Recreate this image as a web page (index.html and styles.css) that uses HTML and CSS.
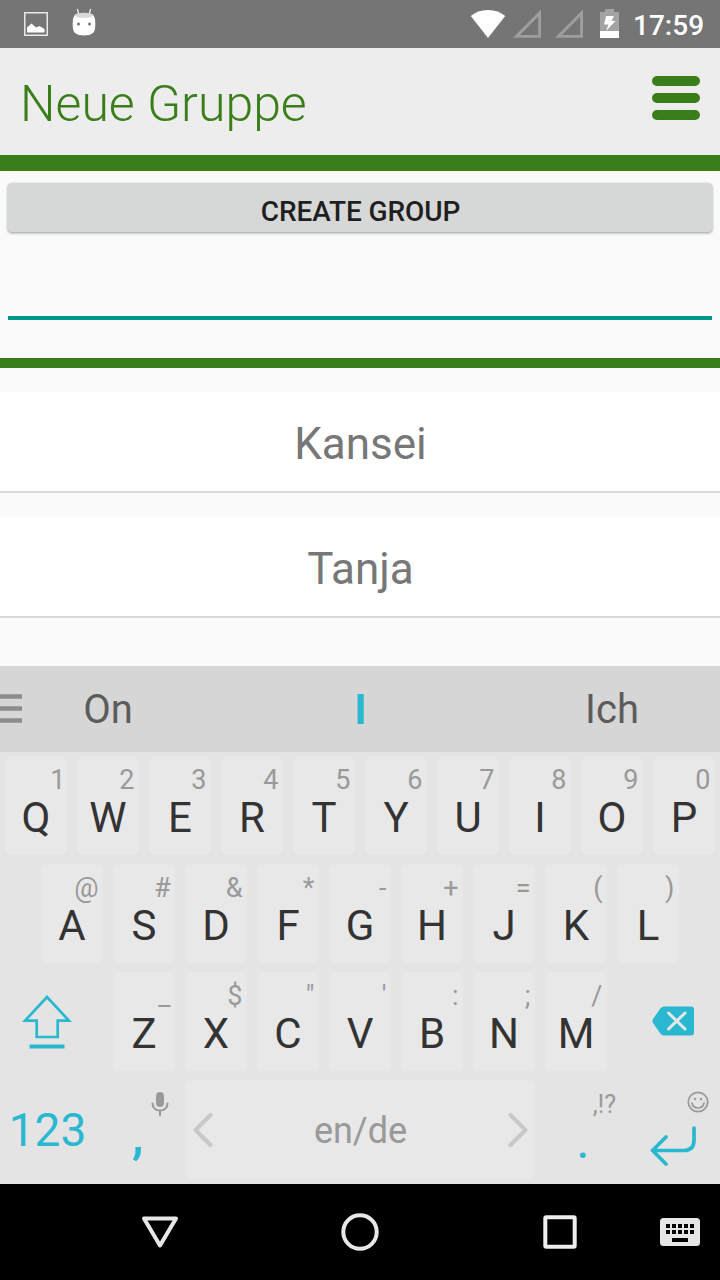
FILE: index.html
```html
<!DOCTYPE html>
<html lang="de">
<head>
<meta charset="utf-8">
<title>Neue Gruppe</title>
<link rel="stylesheet" href="styles.css">
</head>
<body>
<div class="statusbar">
  <svg class="ic-photo" width="24" height="24" viewBox="0 0 24 24"><rect x=".75" y=".75" width="22.5" height="22.5" fill="none" stroke="#e8e8e8" stroke-width="1.5"/><path d="M3 20.500V15.500L7.500 11.500L12 15.500L15.500 14L20.500 17V20.500Z" fill="#fff"/></svg>
  <svg class="ic-droid" width="24" height="28" viewBox="0 0 24 28"><path d="M5.500 1.500L7 7M18.500 1.500L17 7" stroke="#eee" stroke-width="1.300" stroke-linecap="round"/><path d="M3 7Q12 3.500 21 7Q23.500 9 23.300 17Q23.200 23 21 25Q18 27.500 12 27.500T3 25Q.8 23 .7 17Q.5 9 3 7Z" fill="#fff"/><ellipse cx="12" cy="7.300" rx="9.500" ry="2.600" fill="#d9d9d9"/><circle cx="6.500" cy="16" r="1.500" fill="#757575"/><circle cx="17.500" cy="16" r="1.500" fill="#757575"/></svg>
  <svg class="ic-wifi" width="36" height="30" viewBox="0 0 36 30"><path d="M.8 8Q7.500 2 18 2T35.200 8L18 30Z" fill="#fff"/></svg>
  <svg class="ic-signal" width="28" height="30" viewBox="0 0 28 30"><path d="M3.500 27.400H26.600V4Z" fill="none" stroke="#9e9e9e" stroke-width="2.900"/></svg>
  <svg class="ic-signal" width="28" height="30" viewBox="0 0 28 30"><path d="M3.500 27.400H26.600V4Z" fill="none" stroke="#9e9e9e" stroke-width="2.900"/></svg>
  <svg class="ic-battery" width="19" height="30" viewBox="0 0 19 30"><path d="M5 1H14V4H19V23H0V4H5Z" fill="#a3a3a3"/><path d="M0 23H19V30H0Z" fill="#fff"/><path d="M6 8H14L11.500 13H15.500L6 23L8.500 16.500H4Z" fill="#fff"/></svg>
  <span class="clock">17:59</span>
</div>
<header class="appbar">
  <h1 class="title">Neue Gruppe</h1>
  <div class="menu"><i class="menu-bar"></i><i class="menu-bar"></i><i class="menu-bar"></i></div>
</header>
<section class="form">
  <div class="create">CREATE GROUP</div>
  <div class="field"></div>
</section>
<main class="list">
  <div class="item">Kansei</div>
  <div class="item">Tanja</div>
</main>
<div class="suggest">
  <svg class="handle" width="22" height="30" viewBox="0 0 22 30"><path d="M0 3.500H22M0 15.500H22M0 27.500H22" stroke="#8c8c8c" stroke-width="4.600"/></svg>
  <span class="word word-left">On</span><span class="word word-active">I</span><span class="word word-right">Ich</span>
</div>
<div class="keyboard">
  <div class="row">
    <div class="key"><span class="hint hint-one">1</span><span class="letter">Q</span></div>
    <div class="key"><span class="hint">2</span><span class="letter">W</span></div>
    <div class="key"><span class="hint">3</span><span class="letter">E</span></div>
    <div class="key"><span class="hint">4</span><span class="letter">R</span></div>
    <div class="key"><span class="hint">5</span><span class="letter">T</span></div>
    <div class="key"><span class="hint">6</span><span class="letter">Y</span></div>
    <div class="key"><span class="hint">7</span><span class="letter">U</span></div>
    <div class="key"><span class="hint">8</span><span class="letter">I</span></div>
    <div class="key"><span class="hint">9</span><span class="letter">O</span></div>
    <div class="key"><span class="hint">0</span><span class="letter">P</span></div>
  </div>
  <div class="row">
    <div class="key"><span class="hint">@</span><span class="letter">A</span></div>
    <div class="key"><span class="hint">#</span><span class="letter">S</span></div>
    <div class="key"><span class="hint">&amp;</span><span class="letter">D</span></div>
    <div class="key"><span class="hint">*</span><span class="letter">F</span></div>
    <div class="key"><span class="hint">-</span><span class="letter">G</span></div>
    <div class="key"><span class="hint">+</span><span class="letter">H</span></div>
    <div class="key"><span class="hint">=</span><span class="letter">J</span></div>
    <div class="key"><span class="hint">(</span><span class="letter">K</span></div>
    <div class="key"><span class="hint">)</span><span class="letter">L</span></div>
  </div>
  <div class="row">
    <div class="side shift"><svg width="50" height="55" viewBox="0 0 50 55"><path d="M25 2L47 25.700H35.700V42H14.700V25.700H3Z" fill="none" stroke="#2ab8d1" stroke-width="2.700"/><path d="M7.500 51.500H42.500" stroke="#2ab8d1" stroke-width="4"/></svg></div>
    <div class="key"><span class="hint">_</span><span class="letter">Z</span></div>
    <div class="key"><span class="hint">$</span><span class="letter">X</span></div>
    <div class="key"><span class="hint">"</span><span class="letter">C</span></div>
    <div class="key"><span class="hint">'</span><span class="letter">V</span></div>
    <div class="key"><span class="hint">:</span><span class="letter">B</span></div>
    <div class="key"><span class="hint">;</span><span class="letter">N</span></div>
    <div class="key"><span class="hint">/</span><span class="letter">M</span></div>
    <div class="side erase"><svg width="42" height="30" viewBox="0 0 42 30"><path d="M12 .5H39Q42 .5 42 3.500V26.500Q42 29.500 39 29.500H12Q9.500 29.500 8 27L1 17Q-.2 15 1 13L8 3Q9.500 .5 12 .5Z" fill="#2ab8d1"/><path d="M16.500 7L33 23M33 7L16.500 23" stroke="#e8e8e8" stroke-width="3" stroke-linecap="round"/></svg></div>
  </div>
  <div class="row">
    <div class="numbers">123</div>
    <div class="comma"><svg class="mic" width="18" height="25" viewBox="0 0 18 25"><rect x="5" y="0" width="8" height="15" rx="4" fill="#999"/><path d="M1.500 11.500Q2 18.500 9 18.500T16.500 11.500M9 18.500V23.500" fill="none" stroke="#999" stroke-width="2" stroke-linecap="round"/></svg><span class="punct">,</span></div>
    <div class="space"><svg width="20" height="36" viewBox="0 0 20 36"><path d="M17.500 3L2.500 18L17.500 33" fill="none" stroke="#c8c8c8" stroke-width="4" stroke-linecap="round" stroke-linejoin="round"/></svg><span class="language">en/de</span><svg width="20" height="36" viewBox="0 0 20 36"><path d="M2.500 3L17.500 18L2.500 33" fill="none" stroke="#c8c8c8" stroke-width="4" stroke-linecap="round" stroke-linejoin="round"/></svg></div>
    <div class="period"><span class="marks">,!?</span><span class="punct">.</span></div>
    <div class="enter">
      <svg class="smile" width="22" height="22" viewBox="0 0 22 22"><g fill="none" stroke="#999" stroke-width="1.700"><circle cx="11" cy="11" r="9.700"/><path d="M5 12Q6 17 11 17T17 12" stroke-linecap="round"/></g><circle cx="8" cy="8" r="1.200" fill="#999"/><circle cx="14" cy="8" r="1.200" fill="#999"/></svg>
      <svg class="return" width="46" height="40" viewBox="0 0 46 40"><path d="M44 2V14Q44 24.500 34 24.500H2.500M16 11L2.500 24.500L16 38" fill="none" stroke="#2ab8d1" stroke-width="3.700" stroke-linecap="round" stroke-linejoin="round"/></svg>
    </div>
  </div>
</div>
<nav class="navbar">
  <svg class="nav-back" width="38" height="34" viewBox="0 0 38 34"><path d="M3 3.500H35L19 30.500Z" fill="none" stroke="#e8e8e8" stroke-width="4" stroke-linejoin="round"/></svg>
  <svg class="nav-home" width="38" height="38" viewBox="0 0 38 38"><circle cx="19" cy="19" r="16.700" fill="none" stroke="#e8e8e8" stroke-width="4"/></svg>
  <svg class="nav-recent" width="34" height="34" viewBox="0 0 34 34"><rect x="2.300" y="2.300" width="29.400" height="29.400" rx="1" fill="none" stroke="#eee" stroke-width="4"/></svg>
  <svg class="nav-keys" width="40" height="28" viewBox="0 0 40 28"><rect width="40" height="28" rx="3.500" fill="#e6e6e6"/><path d="M6 8H34M6 14H34" stroke="#000" stroke-width="4" stroke-dasharray="4 2"/><path d="M12 22H28" stroke="#000" stroke-width="4"/></svg>
</nav>
</body>
</html>
```
FILE: styles.css
```css
* { box-sizing: border-box; }
body { margin: 0; width: 720px; height: 1280px; overflow: hidden; background: #fafafa; font-family: Roboto, sans-serif; display: flex; flex-direction: column; }
svg { display: block; flex: none; }

.statusbar { height: 48px; flex: none; background: #757575; display: flex; align-items: flex-start; padding: 8px 16px 0 24px; }
.ic-photo { margin-top: 4px; }
.ic-droid { margin-left: 24px; }
.ic-wifi { margin-left: 374px; }
.ic-signal { margin: 1px 0 0 7px; }
.ic-signal + .ic-signal { margin-left: 14px; }
.ic-battery { margin-left: 17px; }
.clock { margin: 1px 0 0 14px; color: #fff; font-size: 28px; font-weight: 500; line-height: 33px; white-space: nowrap; }

.appbar { height: 123px; flex: none; background: #ededed; border-bottom: 16px solid #3a7e1a; display: flex; justify-content: space-between; padding: 0 20px 0 20px; }
.title { margin: 25px 0 0; height: 60px; color: #3a7e1a; font-size: 50px; font-weight: 300; line-height: 62px; white-space: nowrap; }
.menu { width: 48px; margin-top: 28px; display: flex; flex-direction: column; gap: 7px; }
.menu-bar { height: 10px; border-radius: 5px; background: #3a7e1a; filter: blur(.6px); }

.form { height: 197px; flex: none; padding: 12px 8px 0; border-bottom: 10px solid #3a7e1a; }
.create { height: 49px; background: #d6d8d7; border-radius: 4px; box-shadow: 0 1px 3px rgba(0,0,0,.4); text-align: center; color: #1f1f1f; font-size: 28px; font-weight: 500; letter-spacing: -.1px; line-height: 57px; padding-left: 1px; }
.field { height: 88px; border-bottom: 4px solid #009688; }

.list { height: 298px; flex: none; padding-top: 24px; display: flex; flex-direction: column; gap: 24px; }
.item { height: 101px; flex: none; background: #fff; border-bottom: 2px solid #d9d9d9; color: #777; text-align: center; font-size: 44px; line-height: 104px; padding-left: 1px; }

.suggest { height: 86px; flex: none; background: #d6d6d6; display: flex; align-items: center; color: #5c5c5c; font-size: 40px; }
.handle { margin-bottom: 2px; }
.word { text-align: center; line-height: 86px; padding-top: 2px; }
.word-left { width: 172px; }
.word-active { width: 332px; color: #2ab8d1; font-size: 42px; font-weight: 700; padding-left: 1px; padding-top: 1px; }
.word-right { width: 172px; }

.keyboard { height: 432px; flex: none; background: #e4e4e4; padding-top: 4px; display: flex; flex-direction: column; gap: 9px; }
.row { display: flex; justify-content: center; gap: 10px; height: 99px; flex: none; }
.key { width: 62px; flex: none; background: #e8e8e8; border-radius: 6px; padding-top: 8px; display: flex; flex-direction: column; }
.hint { color: #999; font-size: 27px; line-height: 32px; text-align: right; padding-right: 4.5px; }
.hint-one { padding-right: 1.5px; }
.letter { color: #333; font-size: 42px; line-height: 43px; text-align: center; }
.side { width: 98px; flex: none; }
.shift { padding: 23px 0 0 17px; }
.erase { padding: 34px 0 0 35px; }
.numbers { width: 94px; color: #2ab8d1; font-size: 46px; line-height: 100px; text-align: center; padding-left: 1px; }
.comma { width: 71px; padding-top: 12px; }
.mic { margin-left: 47px; }
.punct { display: block; color: #2ab8d1; font-size: 52px; line-height: 46px; font-weight: 500; }
.comma .punct { padding-left: 28px; line-height: 38px; }
.space { width: 350px; background: #e8e8e8; border-radius: 6px; display: flex; align-items: center; justify-content: space-between; padding: 0 7px 0 8px; color: #999; font-size: 36px; line-height: 99px; }
.language { padding-top: 3px; }
.period { width: 81px; padding-top: 10px; }
.marks { display: block; text-align: right; color: #999; font-size: 25px; line-height: 30px; padding-right: 10px; }
.period .punct { padding-left: 32px; font-size: 42px; line-height: 47px; }
.enter { width: 84px; padding-top: 11px; }
.smile { margin-left: 51px; }
.return { margin: 13px 0 0 13.5px; }

.navbar { height: 96px; flex: none; background: #000; display: flex; align-items: center; padding-left: 141px; }
.nav-home { margin-left: 162px; }
.nav-recent { margin-left: 164px; }
.nav-keys { margin-left: 83px; }
```
